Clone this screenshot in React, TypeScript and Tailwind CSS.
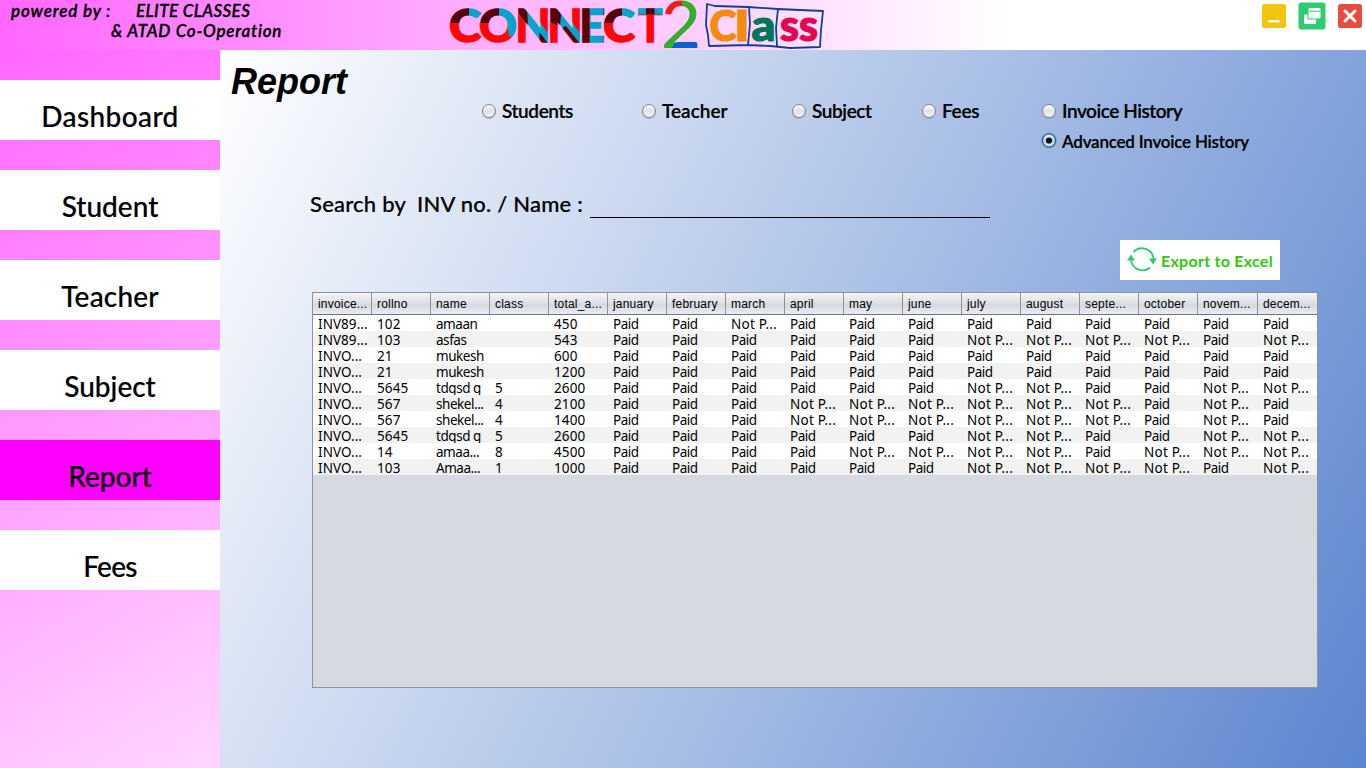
import React from "react";

const BASE_FONT = "font-['Lato','Open_Sans',sans-serif]";

const months = ["january", "february", "march", "april", "may", "june", "july", "august", "septe...", "october", "novem...", "decem..."];
const headers = ["invoice...", "rollno", "name", "class", "total_a...", ...months];

const rows: [string, string, string, string, string, string][] = [
  ["INV89...", "102", "amaan", "", "450", "PPNPPPPPPPPP"],
  ["INV89...", "103", "asfas", "", "543", "PPPPPPNNNNPN"],
  ["INVO...", "21", "mukesh", "", "600", "PPPPPPPPPPPP"],
  ["INVO...", "21", "mukesh", "", "1200", "PPPPPPPPPPPP"],
  ["INVO...", "5645", "tdgsd g", "5", "2600", "PPPPPPNNPPNN"],
  ["INVO...", "567", "shekel...", "4", "2100", "PPPNNNNNNPNP"],
  ["INVO...", "567", "shekel...", "4", "1400", "PPPNNNNNNPNP"],
  ["INVO...", "5645", "tdgsd g", "5", "2600", "PPPPPPNNPPNN"],
  ["INVO...", "14", "amaa...", "8", "4500", "PPPPNNNNPNNN"],
  ["INVO...", "103", "Amaa...", "1", "1000", "PPPPPPNNNNPN"],
];

const menu = [
  { label: "Dashboard", cls: "tracking-[0.4px]" },
  { label: "Student", cls: "tracking-[0px]" },
  { label: "Teacher", cls: "tracking-[0.2px]" },
  { label: "Subject", cls: "tracking-[0px]" },
  { label: "Report", cls: "tracking-[0px]" },
  { label: "Fees", cls: "tracking-[-0.7px]" },
];

const logoLetters: [string, number, number][] = [
  ["C", 449, 32],
  ["O", 479, 38],
  ["N", 515.5, 35],
  ["N", 547.5, 35],
  ["E", 579.5, 25.5],
  ["C", 603, 32],
  ["T", 638, 24.5],
];

function cellTracking(text: string) {
  if (/^\d+$/.test(text)) return "tracking-[0.15px]";
  if (text.startsWith("INV")) return "tracking-[0.05px]";
  if (text.startsWith("Not")) return "tracking-[0.25px]";
  return "tracking-[-0.45px]";
}

function Logo() {
  return (
    <svg width="384" height="50" viewBox="446 0 384 50" className="block">
      <defs>
        <pattern id="ribbon" patternUnits="userSpaceOnUse" x="446" y="0" width="384" height="50">
          <g transform="translate(-446 0)">
            <rect x="446" width="384" height="50" fill="#ff0606" />
            <path d="M446 0H469V23H446ZM478 0H499V23H478Z" fill="#560008" />
            <path d="M469 0H480.500V23H469Z" fill="#07a3cc" />
            <path d="M499 0H517.500V38L509 36L507 23H499Z" fill="#07a3cc" />
            <path d="M517.500 6H529L549 35V45H541L517.500 12ZM549.500 6H561L581 35V45H573L549.500 12Z" fill="#07a3cc" />
            <path d="M517.500 6H527L528 26L517.500 12ZM549.500 6H562L560 26L549.500 22ZM539.500 32L549 45H539.500ZM566 26L581 45H571L562 28Z" fill="#560008" />
            <rect x="589.500" y="0" width="14" height="50" fill="#07a3cc" />
            <path d="M581 0H589.500V50H581ZM603.500 0H622V23H603.500Z" fill="#560008" />
            <path d="M622 0H637V23H622ZM637 0H664V14.500H637Z" fill="#07a3cc" />
            <rect x="646" y="0" width="8.500" height="14.500" fill="#560008" />
          </g>
        </pattern>
        <pattern id="twoFill" patternUnits="userSpaceOnUse" x="660" y="0" width="44" height="50">
          <rect width="44" height="50" fill="#32ad2c" />
          <path d="M0 0H22V7L14 16H0Z" fill="#ee1c1c" />
          <path d="M15 42H44V50H11Z" fill="#0b5fd0" />
        </pattern>
      </defs>
      <g className="font-['Lato',sans-serif] font-black" fontSize="46.500" fill="url(#ribbon)" stroke="url(#ribbon)" strokeWidth="1.500">
        {logoLetters.map(([ch, x, w]) => (
          <text key={x} x={x} y="42.300" textLength={w} lengthAdjust="spacingAndGlyphs">{ch}</text>
        ))}
      </g>
      <text x="661" y="48" fontSize="66" textLength="40" lengthAdjust="spacingAndGlyphs" fill="url(#twoFill)" className="font-['Lato',sans-serif] font-medium">2</text>
      <path d="M707 4L715 6L748 7L778 9L800 10L823 11L821 30L820 47L790 48L770 46L748 45L709 46L708 35L706 25ZM749 8L750 24L748 45M778 9L776 28L777 46" fill="none" stroke="#123f95" strokeWidth="1.800" strokeLinejoin="round" />
      <g className="font-['Lato',sans-serif] font-black" strokeWidth="1.200">
        <text x="709.500" y="40.500" fontSize="42" textLength="27" lengthAdjust="spacingAndGlyphs" fill="#f58a10" stroke="#f58a10">C</text>
        <text x="735" y="40.500" fontSize="41" textLength="14" lengthAdjust="spacingAndGlyphs" fill="#f58a10" stroke="#f58a10">l</text>
        <text x="751.500" y="40.500" fontSize="43" textLength="24" lengthAdjust="spacingAndGlyphs" fill="#04745d" stroke="#04745d">a</text>
        <text x="780" y="40.500" fontSize="44" textLength="38" lengthAdjust="spacingAndGlyphs" fill="#e4044f" stroke="#e4044f">ss</text>
      </g>
    </svg>
  );
}

function Radio({ checked = false }: { checked?: boolean }) {
  return (
    <svg width="18" height="18" viewBox="0 0 18 18" className="shrink-0">
      <defs>
        <linearGradient id={checked ? "rOn" : "rOff"} x1="0" y1="0" x2="0" y2="1">
          <stop offset="0" stopColor={checked ? "#f4f9fd" : "#ffffff"} />
          <stop offset="0.5" stopColor={checked ? "#b4cfe4" : "#dfe1e6"} />
          <stop offset="1" stopColor={checked ? "#dff0fc" : "#f4f5f8"} />
        </linearGradient>
      </defs>
      {checked && <circle cx="9" cy="8.500" r="8" fill="#6ba3cc" />}
      {!checked && <circle cx="9" cy="10" r="7" fill="#8f98ab" fillOpacity="0.5" />}
      <circle cx="9" cy={checked ? 8.5 : 9} r="6.500" fill={checked ? "url(#rOn)" : "url(#rOff)"} stroke={checked ? "#2d4a66" : "#7f848f"} />
      {checked && <circle cx="9" cy="8.500" r="3.100" fill="#101214" />}
    </svg>
  );
}

function RadioItem({ label, cls, checked }: { label: string; cls: string; checked?: boolean }) {
  return (
    <label className={`flex h-[30px] items-center gap-[4px] whitespace-nowrap font-semibold text-black [-webkit-text-stroke:0.2px_black] ${cls}`}>
      <Radio checked={checked} />
      <span className="pt-px">{label}</span>
    </label>
  );
}

function WindowButtons() {
  return (
    <svg width="106" height="32" viewBox="1260 0 106 32" className="block">
      <rect x="1262" y="4" width="24" height="24" rx="2.500" fill="#f1c40f" />
      <rect x="1268.500" y="20" width="11" height="2.500" fill="#fff" />
      <rect x="1298.500" y="2.500" width="27" height="27" rx="2.500" fill="#2ecc71" />
      <rect x="1304" y="14.500" width="12" height="9.500" rx="1" fill="#fff" />
      <rect x="1307.500" y="7.500" width="14" height="12" rx="1" fill="#2ecc71" />
      <rect x="1308.500" y="8" width="12" height="10.500" rx="1" fill="#fff" />
      <path d="M1309 11.200H1320.500" stroke="#2ecc71" strokeWidth="1" />
      <rect x="1338" y="4" width="24" height="24" rx="2.500" fill="#e74c3c" />
      <path d="M1345 11L1355 21M1355 11L1345 21" stroke="#fff" strokeWidth="3" strokeLinecap="round" />
    </svg>
  );
}

export default function App() {
  return (
    <div className={`flex h-[768px] w-[1366px] flex-col overflow-hidden text-black ${BASE_FONT}`}>
      <header className="flex h-[50px] shrink-0 bg-[linear-gradient(90deg,#ff66ff_0px,#ffffff_1010px)]">
        <div className="w-[446px] pt-px text-[17px] leading-[20px] font-semibold whitespace-nowrap italic [-webkit-text-stroke:0.3px_black]">
          <div className="flex pl-[11px]">
            <span className="w-[125px] tracking-[0.85px]">powered by :</span>
            <span className="tracking-[0.4px]">ELITE CLASSES</span>
          </div>
          <div className="pl-[111px] tracking-[0.75px]">&amp; ATAD Co-Operation</div>
        </div>
        <div className="w-[814px]">
          <Logo />
        </div>
        <WindowButtons />
      </header>
      <div className="flex min-h-0 flex-1">
        <nav className="flex w-[220px] shrink-0 flex-col gap-[30px] bg-[linear-gradient(150deg,#ff66ff,#ffd6ff)] pt-[30px]">
          {menu.map((m) => (
            <div key={m.label} className={`h-[60px] pt-[17px] text-center text-[28px] leading-[38px] font-medium [-webkit-text-stroke:0.2px_black] ${m.cls} ${m.label === "Report" ? "bg-[#ff00ff]" : "bg-white"}`}>
              {m.label}
            </div>
          ))}
        </nav>
        <main className="flex flex-1 flex-col bg-[linear-gradient(117deg,#ffffff,#5b85cf)]">
          <h1 className="h-[46px] pt-[11px] pl-[11px] font-['Liberation_Sans',sans-serif] text-[36px] leading-[42px] font-bold italic">Report</h1>
          <div className="flex pl-[260px]">
            <div className="w-[160px]"><RadioItem label="Students" cls="text-[19px] tracking-[-0.4px]" /></div>
            <div className="w-[150px]"><RadioItem label="Teacher" cls="text-[19px]" /></div>
            <div className="w-[130px]"><RadioItem label="Subject" cls="text-[19px] tracking-[-0.4px]" /></div>
            <div className="w-[120px]"><RadioItem label="Fees" cls="text-[19px] tracking-[-0.3px]" /></div>
            <div>
              <RadioItem label="Invoice History" cls="text-[19px] tracking-[-0.45px]" />
              <RadioItem label="Advanced Invoice History" cls="text-[17px] tracking-[-0.22px]" checked />
            </div>
          </div>
          <div className="mt-[32px] flex h-[30px] pl-[90px]">
            <span className="w-[280px] text-[22px] leading-[31px] font-medium tracking-[0.22px] whitespace-pre [-webkit-text-stroke:0.2px_black]">Search by  INV no. / Name :</span>
            <div className="h-[30px] w-[400px] border-b border-black" />
          </div>
          <button className="mt-[22px] ml-[900px] flex h-[40px] w-[160px] items-center bg-white pl-[7px] text-[16px] font-bold tracking-[0.27px] text-[#2fc90a]">
            <svg width="30" height="30" viewBox="0 0 30 30" fill="none" stroke="#2ecc71" strokeWidth="1.900" className="shrink-0">
              <path d="M6.500 7A11.600 11.600 0 0 1 26.500 15" />
              <path d="M23 22.500A11.600 11.600 0 0 1 4 15" />
              <path d="M22 13.500H30L26 19.500ZM0 15.500H8L4 9.500Z" fill="#2ecc71" stroke="none" />
            </svg>
            <span className="pt-px pl-[4px] whitespace-nowrap">Export to Excel</span>
          </button>
          <div className="mt-[12px] ml-[92px] flex h-[396px] w-[1006px] flex-col border border-[#8e9299] bg-[#d6d9df]">
            <div className="flex h-[22px] shrink-0 border-b border-[#6f747d] bg-[linear-gradient(180deg,#f3f4f6_0%,#dfe1e6_45%,#d5d8de_55%,#e9ecf2_100%)] font-['Liberation_Sans',sans-serif] text-[12px] tracking-[0.2px]">
              {headers.map((h, i) => (
                <div key={h} className={`shrink-0 border-r border-[#8e9299] pl-[5px] leading-[22px] whitespace-nowrap ${i >= 15 ? "w-[60px]" : "w-[59px]"}`}>
                  {h}
                </div>
              ))}
            </div>
            {rows.map((r, ri) => (
              <div key={ri} className={`flex h-[16px] shrink-0 overflow-hidden font-['Noto_Sans',sans-serif] text-[13.5px] leading-[18px] ${ri % 2 ? "bg-[#f2f2f2]" : "bg-white"}`}>
                {[...r.slice(0, 5), ...r[5].split("").map((c) => (c === "P" ? "Paid" : "Not P..."))].map((c, i) => (
                  <div key={i} className={`shrink-0 pl-[5px] whitespace-nowrap ${cellTracking(c)} ${i >= 15 ? "w-[60px]" : "w-[59px]"}`}>
                    {c}
                  </div>
                ))}
              </div>
            ))}
          </div>
        </main>
      </div>
    </div>
  );
}
